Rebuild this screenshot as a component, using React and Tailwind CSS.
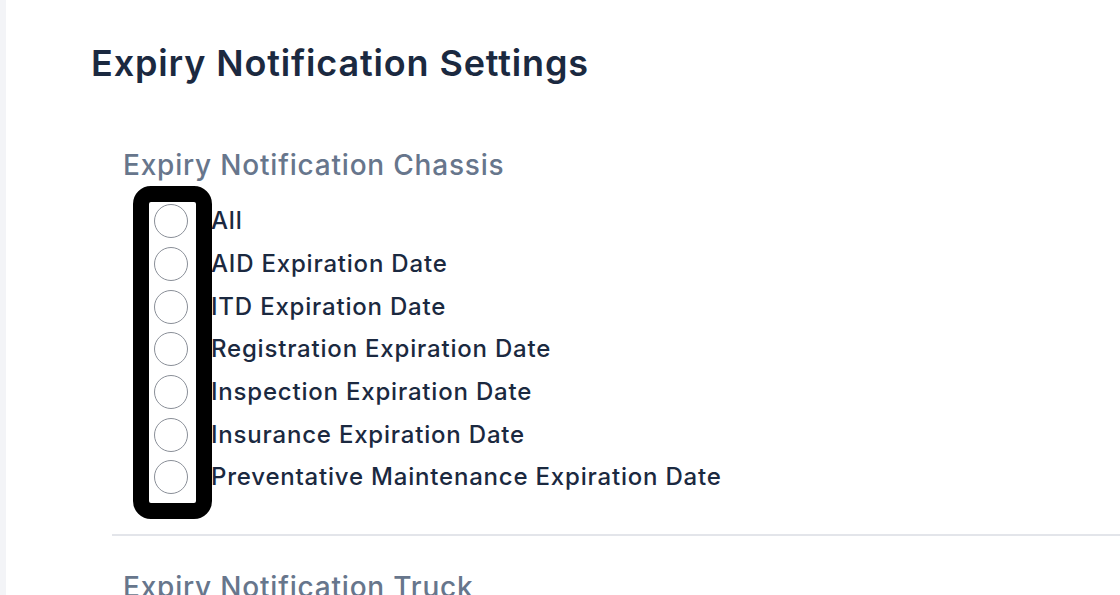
import React from "react";

const items = [
  "All",
  "AID Expiration Date",
  "ITD Expiration Date",
  "Registration Expiration Date",
  "Inspection Expiration Date",
  "Insurance Expiration Date",
  "Preventative Maintenance Expiration Date",
];

export default function App() {
  return (
    <div
      className="relative flex h-[595px] w-[1120px] overflow-hidden bg-white"
      style={{ fontFamily: "Inter, 'Noto Sans', sans-serif" }}
    >
      <div className="w-[6px] shrink-0 bg-[#f3f4f7]" />
      <div className="flex-1">
        <h1 className="ml-[85px] mt-[41px] text-[36px] font-semibold leading-[44px] tracking-[0.85px] text-[#1b2940]">
          Expiry Notification Settings
        </h1>
        <h2 className="ml-[117px] mt-[62px] text-[28px] font-medium leading-[36px] tracking-[0.8px] text-[#67768c]">
          Expiry Notification Chassis
        </h2>
        <ul className="ml-[148px] mt-[17px] flex flex-col">
          {items.map((t) => (
            <li key={t} className="flex h-[42.67px] items-center">
              <span className="h-[34px] w-[34px] shrink-0 rounded-full border border-[#8a8f98] bg-white" />
              <span className="ml-[23px] text-[24px] font-medium leading-none tracking-[0.8px] text-[#1b2940]">
                {t}
              </span>
            </li>
          ))}
        </ul>
        <div className="ml-[106px] mt-[35px] h-[2px] bg-[#e3e5ea]" />
        <h2 className="ml-[117px] mt-[33px] text-[28px] font-medium leading-[36px] tracking-[0.8px] text-[#67768c]">
          Expiry Notification Truck
        </h2>
      </div>
      <div className="pointer-events-none absolute left-[133px] top-[186px] h-[333px] w-[79px] rounded-[18px] border-[16px] border-black" />
    </div>
  );
}
